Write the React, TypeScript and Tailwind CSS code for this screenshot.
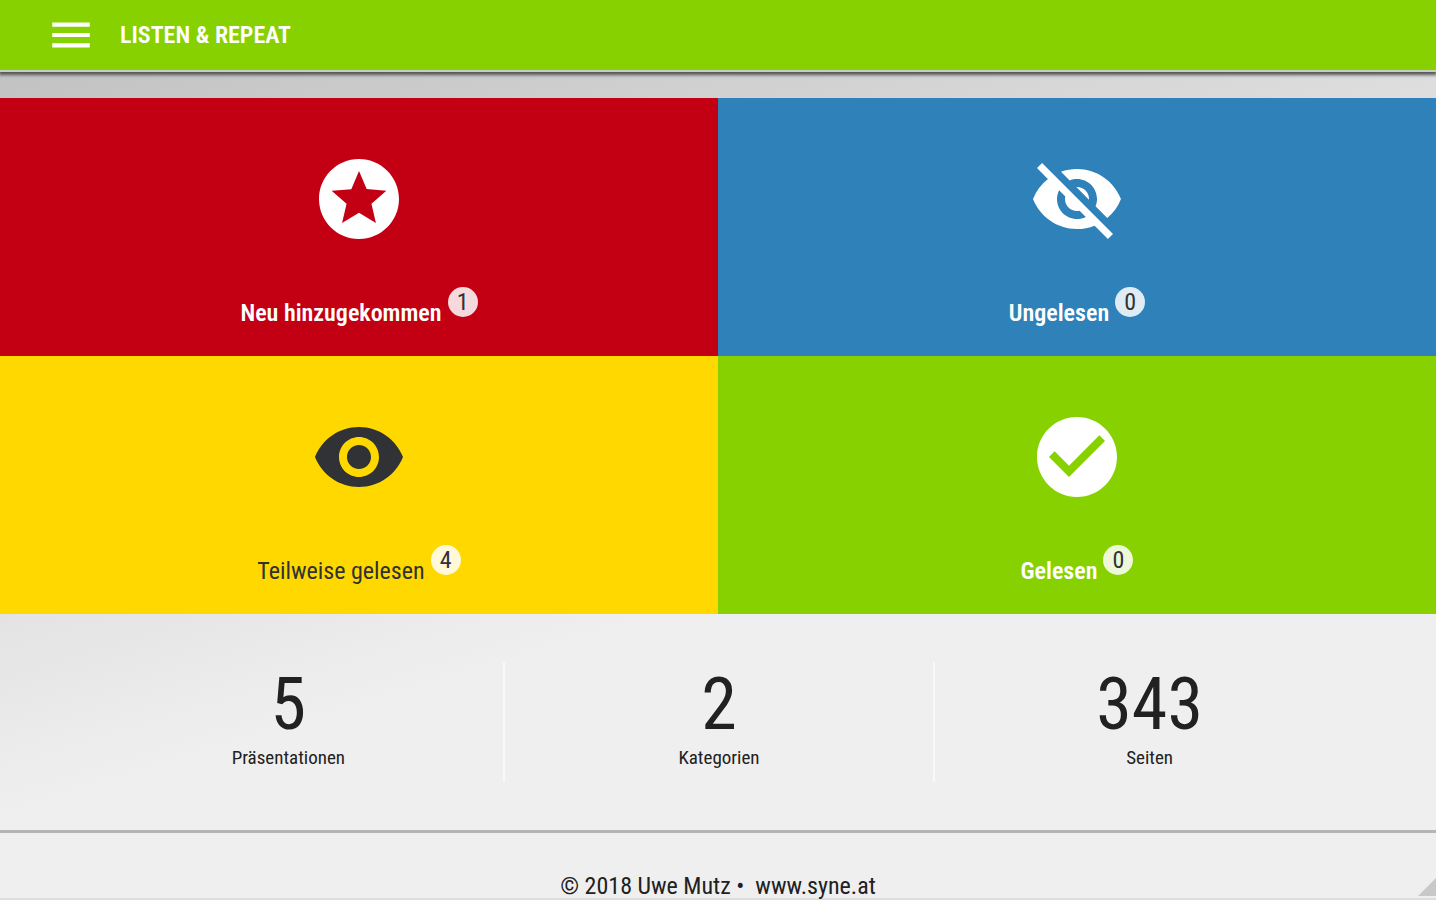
import { MdCheckCircle, MdMenu, MdStars, MdVisibility, MdVisibilityOff } from "react-icons/md";
import type { IconType } from "react-icons";

type Tile = { label: string; count: number; Icon: IconType; tone: string };

const tiles: Tile[] = [
  { label: "Neu hinzugekommen", count: 1, Icon: MdStars, tone: "bg-[#c30013] font-semibold text-white" },
  { label: "Ungelesen", count: 0, Icon: MdVisibilityOff, tone: "bg-[#2e82b9] font-semibold text-white" },
  { label: "Teilweise gelesen", count: 4, Icon: MdVisibility, tone: "bg-[#ffd800] font-normal text-[#303236]" },
  { label: "Gelesen", count: 0, Icon: MdCheckCircle, tone: "bg-[#88d100] font-semibold text-white" },
];

const stats = [
  { value: 5, label: "Präsentationen" },
  { value: 2, label: "Kategorien" },
  { value: 343, label: "Seiten" },
];

export default function App() {
  return (
    <div className="flex min-h-screen flex-col border-b-2 border-[#dedede] bg-[#efefef] bg-[linear-gradient(163deg,#bebebe_0%,#efefef_61%)] font-['Roboto_Condensed','Liberation_Sans_Narrow',Roboto,sans-serif] text-[#212121]">
      <header className="flex h-[72px] items-center gap-6 border-b-2 border-[#c9cfc0] bg-[#88d100] pl-[46px] text-white shadow-[0_2px_3px_1px_#555]">
        <button type="button" aria-label="Menü" className="flex">
          <MdMenu size={50} />
        </button>
        <h1 className="text-2xl font-semibold">LISTEN &amp; REPEAT</h1>
      </header>

      <main className="mt-[26px]">
        <nav className="grid grid-cols-2">
          {tiles.map(({ label, count, Icon, tone }) => (
            <a key={label} href="#" className={`flex h-[258px] flex-col items-center pt-[53px] ${tone}`}>
              <Icon size={96} />
              <span className="mt-10 flex items-start gap-1.5 text-2xl">
                <span className="pt-2.5">{label}</span>
                <span className="flex size-[30px] items-center justify-center rounded-full bg-white/85 font-normal text-[#303236]">
                  {count}
                </span>
              </span>
            </a>
          ))}
        </nav>

        <dl className="mx-[72px] my-12 grid grid-cols-3">
          {stats.map(({ value, label }) => (
            <div
              key={label}
              className="flex h-[120px] flex-col-reverse items-center justify-end border-l-2 border-[#f8f8f8] first:border-transparent"
            >
              <dt className="text-[19px] leading-5">{label}</dt>
              <dd className="text-7xl leading-[86px]">{value}</dd>
            </div>
          ))}
        </dl>
      </main>

      <footer className="relative flex-1 border-t-[3px] border-[#b5b5b5] bg-[#efefef] pt-[41px] text-center text-2xl leading-6">
        © 2018 Uwe Mutz •&nbsp;<a href="#"> www.syne.at</a>
        <svg className="absolute right-0 bottom-0" width="18" height="20" viewBox="0 0 18 20" aria-hidden="true">
          <path d="M18 0V18H0Z" fill="#c8c8c8" />
        </svg>
      </footer>
    </div>
  );
}
